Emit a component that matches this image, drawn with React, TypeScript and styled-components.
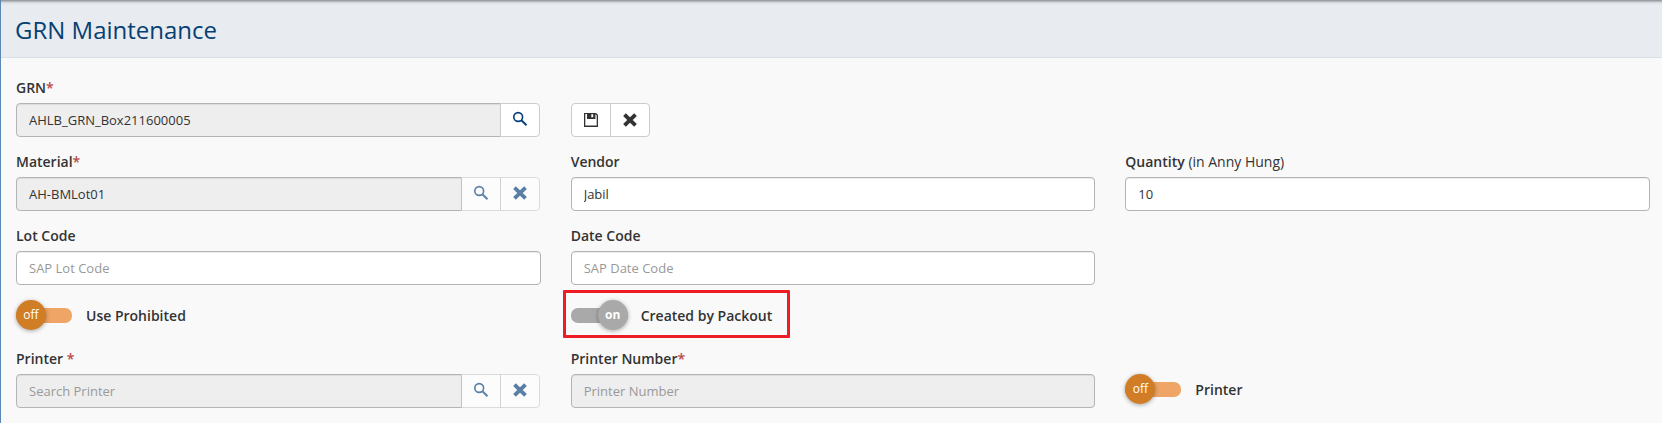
import React from "react";
import styled, { createGlobalStyle } from "styled-components";

const GlobalStyle = createGlobalStyle`
  * { box-sizing: border-box; }
  body {
    margin: 0;
    background: #f9f9f9;
    color: #333;
    font-family: "Open Sans", "Liberation Sans", sans-serif;
    font-size: 14px;
    overflow: hidden;
  }
`;

const Page = styled.main`
  height: 423px;
  border-left: 1px solid #5b88b5;
`;

const Header = styled.header`
  display: flex;
  align-items: center;
  height: 58px;
  padding: 2px 14px 0;
  border-bottom: 1px solid #d8e0e6;
  background: linear-gradient(#909397 0, #a5a8ab 1px, #c9ccd0 2px, #dde0e4 3px, #e8ebf0 5px);
`;

const Title = styled.h1`
  margin: 0;
  color: #063f72;
  font-size: 24px;
  font-weight: 400;
  line-height: 34px;
`;

const Form = styled.form`
  display: grid;
  grid-template-columns: repeat(3, minmax(0, 1fr));
  grid-template-rows: 74px 74px 74px 49px 74px;
  column-gap: 30px;
  padding: 20px 12px 0 15px;
`;

const Field = styled.div<{ $column?: number }>`
  display: flex;
  flex-direction: column;
  grid-column: ${(p) => p.$column ?? "auto"};
`;

const Label = styled.label`
  height: 25px;
  line-height: 20px;
  font-weight: 600;
  white-space: pre;
`;

const Required = styled.span`
  color: #b94a48;
  font-weight: 600;
`;

const Hint = styled.span`
  font-weight: 400;
`;

const Group = styled.div<{ $full?: boolean }>`
  display: flex;
  height: 34px;
  margin-right: ${(p) => (p.$full ? 0 : "1px")};
`;

const Input = styled.input<{ $joined?: boolean }>`
  flex: 1;
  min-width: 0;
  height: 34px;
  padding: 0 12px;
  border: 1px solid #b2b4b7;
  border-radius: ${(p) => (p.$joined ? "4px 0 0 4px" : "4px")};
  background: #fff;
  box-shadow: inset 0 1px 1px rgba(0, 0, 0, 0.075);
  color: #333;
  font: 400 13px "Open Sans", "Liberation Sans", sans-serif;
  outline: none;

  &:read-only { background: #eee; }
  &::placeholder { color: #999; opacity: 1; }
`;

const IconButton = styled.button<{ $muted?: boolean; $raised?: boolean; $ink?: string }>`
  display: flex;
  align-items: center;
  justify-content: center;
  width: 40px;
  height: 34px;
  margin-left: -1px;
  padding: 0 0 ${(p) => (p.$raised ? "2px" : 0)};
  border: 1px solid #ccc;
  background: #fff;
  color: ${(p) => p.$ink ?? "#063f79"};
  opacity: ${(p) => (p.$muted ? 0.65 : 1)};

  &:first-child { margin-left: 0; border-radius: 4px 0 0 4px; }
  &:last-child { border-radius: 0 4px 4px 0; }
`;

const Actions = styled.div`
  display: flex;
  grid-column: 2 / 4;
  padding-top: 25px;
`;

const SwitchRow = styled.div<{ $column?: number; $lowered?: boolean }>`
  position: relative;
  display: flex;
  align-items: center;
  align-self: start;
  grid-column: ${(p) => p.$column ?? "auto"};
  height: 30px;
  margin-top: ${(p) => (p.$lowered ? "25px" : 0)};
`;

const Track = styled.span<{ $on?: boolean }>`
  display: flex;
  align-items: center;
  justify-content: ${(p) => (p.$on ? "flex-end" : "flex-start")};
  width: ${(p) => (p.$on ? "57px" : "56px")};
  height: 15px;
  border-radius: 7px;
  background: ${(p) => (p.$on ? "#a9a9a9" : "#eea566")};
`;

const Knob = styled.span<{ $on?: boolean }>`
  flex: none;
  width: 30px;
  height: 30px;
  border-radius: 50%;
  background: ${(p) => (p.$on ? "#a9a9a9" : "#d17d26")};
  box-shadow: 0 1px 4px rgba(0, 0, 0, 0.35);
  color: #fff;
  font-size: 12px;
  font-weight: ${(p) => (p.$on ? 700 : 400)};
  line-height: 29px;
  text-align: center;
`;

const SwitchText = styled.span<{ $on?: boolean }>`
  margin-left: ${(p) => (p.$on ? "13px" : "14px")};
  padding-top: 2px;
  font-weight: 600;
  line-height: 20px;
`;

const Highlight = styled.span`
  position: absolute;
  top: -10px;
  left: -8px;
  width: 227px;
  height: 48px;
  border: 3px solid #ee1c25;
  border-radius: 1px;
`;

const SearchIcon = () => (
  <svg width="16" height="16" viewBox="0 0 16 16" fill="none" stroke="currentColor">
    <circle cx="6.2" cy="6" r="4.4" strokeWidth="1.6" />
    <path d="M9.4 9.2L14.5 14.2" strokeWidth="1.9" />
  </svg>
);

const CloseIcon = () => (
  <svg width="16" height="16" viewBox="0 0 16 16" fill="none" stroke="currentColor">
    <path d="M2.5 2.7L13.5 13.3M13.5 2.7L2.5 13.3" strokeWidth="3.9" />
  </svg>
);

const SaveIcon = () => (
  <svg width="16" height="16" viewBox="0 0 16 16">
    <path
      fill="currentColor"
      fillRule="evenodd"
      d="M1 1h12l2 2v12H1zM2.3 2v11.5h11.4V3.5L12.4 2.2V7H4V2z M8.3 2.3v3h1.9v-3z"
    />
  </svg>
);

type ButtonKind = "search" | "clear";

interface TextFieldProps {
  label: string;
  value?: string;
  placeholder?: string;
  required?: boolean;
  hint?: string;
  locked?: boolean;
  muted?: boolean;
  buttons?: ButtonKind[];
  column?: number;
}

const TextField = ({ label, value, placeholder, required, hint, locked, muted, buttons = [], column }: TextFieldProps) => (
  <Field $column={column}>
    <Label>
      {label}
      {required && <Required>*</Required>}
      {hint && <Hint> {hint}</Hint>}
    </Label>
    <Group $full={buttons.length === 0}>
      <Input $joined={buttons.length > 0} defaultValue={value} placeholder={placeholder} readOnly={locked} />
      {buttons.map((kind) => (
        <IconButton key={kind} type="button" $muted={muted} $raised aria-label={kind}>
          {kind === "search" ? <SearchIcon /> : <CloseIcon />}
        </IconButton>
      ))}
    </Group>
  </Field>
);

interface SwitchProps {
  label: string;
  on?: boolean;
  column?: number;
  lowered?: boolean;
  highlighted?: boolean;
}

const Switch = ({ label, on, column, lowered, highlighted }: SwitchProps) => (
  <SwitchRow $column={column} $lowered={lowered}>
    <Track $on={on}>
      <Knob $on={on}>{on ? "on" : "off"}</Knob>
    </Track>
    <SwitchText $on={on}>{label}</SwitchText>
    {highlighted && <Highlight />}
  </SwitchRow>
);

export default function App() {
  return (
    <Page>
      <GlobalStyle />
      <Header>
        <Title>GRN Maintenance</Title>
      </Header>
      <Form>
        <TextField label="GRN" required value="AHLB_GRN_Box211600005" locked buttons={["search"]} />
        <Actions>
          <IconButton type="button" $ink="#333" aria-label="save"><SaveIcon /></IconButton>
          <IconButton type="button" $ink="#333" aria-label="clear"><CloseIcon /></IconButton>
        </Actions>
        <TextField label="Material" required value="AH-BMLot01" locked muted buttons={["search", "clear"]} />
        <TextField label="Vendor" value="Jabil" />
        <TextField label="Quantity" hint="(in Anny Hung)" value="10" />
        <TextField label="Lot Code" placeholder="SAP Lot Code" column={1} />
        <TextField label="Date Code" placeholder="SAP Date Code" column={2} />
        <Switch label="Use Prohibited" column={1} />
        <Switch label="Created by Packout" on highlighted column={2} />
        <TextField label="Printer " required placeholder="Search Printer" locked muted buttons={["search", "clear"]} column={1} />
        <TextField label="Printer Number" required placeholder="Printer Number" locked />
        <Switch label="Printer" lowered />
      </Form>
    </Page>
  );
}
